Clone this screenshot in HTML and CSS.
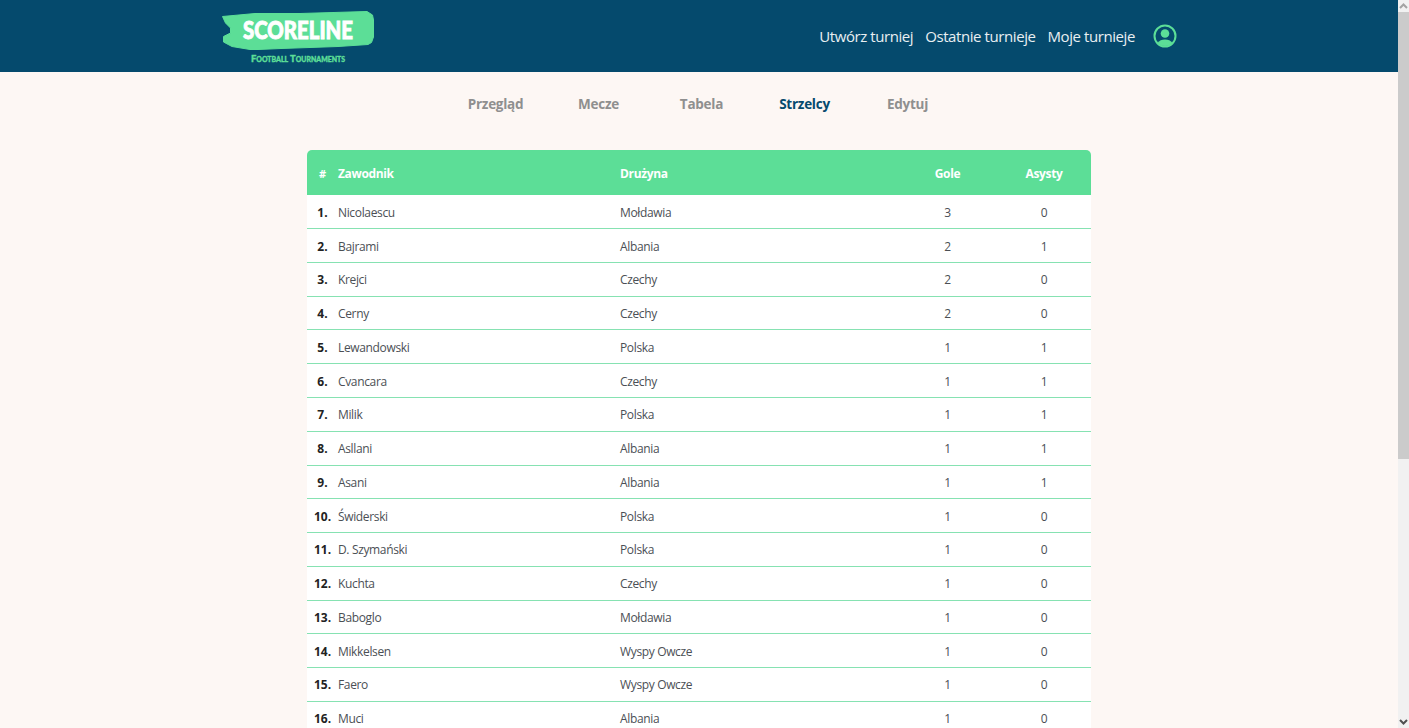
FILE: index.html
```html
<!DOCTYPE html>
<html lang="pl">
  <head>
    <title>Scoreline</title>
    <meta charset="UTF-8" />
    <link rel="stylesheet" href="styles.css">
  </head>
  <body>
    <header class="topbar">
      <div class="topbar__inner">
        <a class="logo" href="#">
          <svg class="logo__svg" width="156" height="56" viewBox="0 0 156 56">
            <path class="logo__brush" d="M1.500 5.500 L34 2.500 L79 2.500 L146 0.500 L151.500 4 L152.500 9 L152.500 26 L150.500 31.500 L147 33.500 L117 35.500 L60 37.500 L37 38.500 L29 38.500 L11 35.500 L2.500 31 L2.500 25.500 L9.500 22 L9.500 17 L4.500 12 Z" />
            <text class="logo__name" x="22" y="28" textLength="110" lengthAdjust="spacingAndGlyphs">SCORELINE</text>
            <text class="logo__sub" x="30" y="50.500" textLength="94" lengthAdjust="spacingAndGlyphs">Football Tournaments</text>
          </svg>
        </a>
        <nav class="topbar__nav">
          <a href="#">Utwórz turniej</a>
          <a href="#">Ostatnie turnieje</a>
          <a href="#">Moje turnieje</a>
          <svg class="topbar__user" width="24" height="24" viewBox="0 0 24 24">
            <circle cx="12" cy="12" r="10.500" fill="none" stroke="#5cde97" stroke-width="2" />
            <circle cx="12" cy="9.500" r="4.300" fill="#5cde97" />
            <path fill="#5cde97" d="M4.500 19 C6 16.500 9 15.500 12 15.500 C15 15.500 18 16.500 19.500 19 C17.500 21 15 22 12 22 C9 22 6.500 21 4.500 19 Z" />
          </svg>
        </nav>
      </div>
    </header>

    <main class="page">
      <div class="tabs">
        <a class="tabs__item" href="#">Przegląd</a>
        <a class="tabs__item" href="#">Mecze</a>
        <a class="tabs__item" href="#">Tabela</a>
        <a class="tabs__item tabs__item--active" href="#">Strzelcy</a>
        <a class="tabs__item" href="#">Edytuj</a>
      </div>

      <table class="scorers">
        <colgroup>
          <col class="scorers__col-rank">
          <col class="scorers__col-name">
          <col class="scorers__col-team">
          <col class="scorers__col-num">
          <col class="scorers__col-num2">
        </colgroup>
        <thead>
          <tr>
            <th class="rank">#</th>
            <th>Zawodnik</th>
            <th>Drużyna</th>
            <th class="num">Gole</th>
            <th class="num">Asysty</th>
          </tr>
        </thead>
        <tbody>
          <tr><td class="rank">1.</td><td>Nicolaescu</td><td>Mołdawia</td><td class="num">3</td><td class="num">0</td></tr>
          <tr><td class="rank">2.</td><td>Bajrami</td><td>Albania</td><td class="num">2</td><td class="num">1</td></tr>
          <tr><td class="rank">3.</td><td>Krejci</td><td>Czechy</td><td class="num">2</td><td class="num">0</td></tr>
          <tr><td class="rank">4.</td><td>Cerny</td><td>Czechy</td><td class="num">2</td><td class="num">0</td></tr>
          <tr><td class="rank">5.</td><td>Lewandowski</td><td>Polska</td><td class="num">1</td><td class="num">1</td></tr>
          <tr><td class="rank">6.</td><td>Cvancara</td><td>Czechy</td><td class="num">1</td><td class="num">1</td></tr>
          <tr><td class="rank">7.</td><td>Milik</td><td>Polska</td><td class="num">1</td><td class="num">1</td></tr>
          <tr><td class="rank">8.</td><td>Asllani</td><td>Albania</td><td class="num">1</td><td class="num">1</td></tr>
          <tr><td class="rank">9.</td><td>Asani</td><td>Albania</td><td class="num">1</td><td class="num">1</td></tr>
          <tr><td class="rank">10.</td><td>Świderski</td><td>Polska</td><td class="num">1</td><td class="num">0</td></tr>
          <tr><td class="rank">11.</td><td>D. Szymański</td><td>Polska</td><td class="num">1</td><td class="num">0</td></tr>
          <tr><td class="rank">12.</td><td>Kuchta</td><td>Czechy</td><td class="num">1</td><td class="num">0</td></tr>
          <tr><td class="rank">13.</td><td>Baboglo</td><td>Mołdawia</td><td class="num">1</td><td class="num">0</td></tr>
          <tr><td class="rank">14.</td><td>Mikkelsen</td><td>Wyspy Owcze</td><td class="num">1</td><td class="num">0</td></tr>
          <tr><td class="rank">15.</td><td>Faero</td><td>Wyspy Owcze</td><td class="num">1</td><td class="num">0</td></tr>
          <tr><td class="rank">16.</td><td>Muci</td><td>Albania</td><td class="num">1</td><td class="num">0</td></tr>
        </tbody>
      </table>
    </main>

    <div class="scrollbar">
      <div class="scrollbar__button">
        <svg width="9" height="6" viewBox="0 0 9 6"><path d="M1 5 L4.500 1.500 L8 5" fill="none" stroke="#a3a3a3" stroke-width="2" /></svg>
      </div>
      <div class="scrollbar__thumb"></div>
      <div class="scrollbar__track"></div>
      <div class="scrollbar__button">
        <svg width="9" height="6" viewBox="0 0 9 6"><path d="M1 1 L4.500 4.500 L8 1" fill="none" stroke="#505050" stroke-width="2" /></svg>
      </div>
    </div>
  </body>
</html>
```

FILE: styles.css
```css
body {
  margin: 0;
  padding-right: 11px;
  font-family: 'Open Sans', 'Noto Sans', Arial, sans-serif;
  background: #fdf7f4;
}

a {
  text-decoration: none;
}

.scrollbar {
  position: fixed;
  top: 0;
  right: 0;
  bottom: 0;
  display: flex;
  flex-direction: column;
  width: 11px;
  background: #f1f1f1;
}

.scrollbar__button {
  display: flex;
  justify-content: center;
  align-items: center;
  height: 12px;
}

.scrollbar__thumb {
  height: 447px;
  background: #cbcbcb;
}

.scrollbar__track {
  flex: 1;
}

.topbar {
  height: 72px;
  background: #054a6d;
}

.topbar__inner {
  display: flex;
  justify-content: space-between;
  align-items: center;
  width: 956px;
  height: 100%;
  margin: auto;
}

.logo {
  display: block;
  height: 56px;
  margin-top: 6px;
}

.logo__svg {
  display: block;
}

.logo__brush {
  fill: #5cde97;
  stroke: #5cde97;
  stroke-width: 1px;
  stroke-linejoin: round;
}

.logo__name {
  font-family: 'Lato', 'Liberation Sans', Arial, sans-serif;
  font-weight: 900;
  font-size: 24px;
  fill: #ffffff;
  stroke: #ffffff;
  stroke-width: 0.9px;
}

.logo__sub {
  font-family: 'Lato', 'Liberation Sans', Arial, sans-serif;
  font-weight: 900;
  font-size: 9.500px;
  font-variant: small-caps;
  fill: #5cde97;
  stroke: #5cde97;
  stroke-width: 0.35px;
}

.topbar__nav {
  display: flex;
  align-items: center;
  gap: 12px;
}

.topbar__nav a {
  font-size: 15px;
  letter-spacing: -0.42px;
  color: #e9eff2;
}

.topbar__user {
  margin-left: 6px;
}

.tabs {
  display: flex;
  justify-content: center;
  padding: 21px 0 0 5px;
  height: 57px;
}

.tabs__item {
  width: 103px;
  font-size: 13.500px;
  line-height: 22px;
  font-weight: 700;
  letter-spacing: -0.25px;
  text-align: center;
  color: #8f8f8f;
}

.tabs__item--active {
  color: #054a6d;
}

.scorers {
  width: 784px;
  margin: 0 auto;
  table-layout: fixed;
  border-collapse: separate;
  border-spacing: 0;
  font-size: 12px;
  letter-spacing: -0.35px;
  color: #4b4f55;
}

.scorers__col-rank {
  width: 31px;
}

.scorers__col-name {
  width: 282px;
}

.scorers__col-team {
  width: 279px;
}

.scorers__col-num {
  width: 97px;
}

.scorers__col-num2 {
  width: 95px;
}

.scorers th {
  height: 45.400px;
  padding: 1px 0 0;
  box-sizing: border-box;
  text-align: left;
  font-weight: 700;
  color: #ffffff;
  background: #5cde97;
}

.scorers th:first-child {
  border-top-left-radius: 5px;
}

.scorers th:last-child {
  border-top-right-radius: 5px;
}

.scorers td {
  height: 33.770px;
  padding: 1px 0 0;
  box-sizing: border-box;
  background: #ffffff;
  border-bottom: 1px solid #86e2b2;
}

.scorers .rank {
  text-align: center;
}

.scorers td.rank {
  font-weight: 700;
  letter-spacing: 0;
  color: #222222;
}

.scorers th.rank {
  font-size: 11px;
  letter-spacing: 0;
}

.scorers .num {
  text-align: center;
}

.scorers th:last-child,
.scorers td:last-child {
  padding-left: 1px;
}
```
